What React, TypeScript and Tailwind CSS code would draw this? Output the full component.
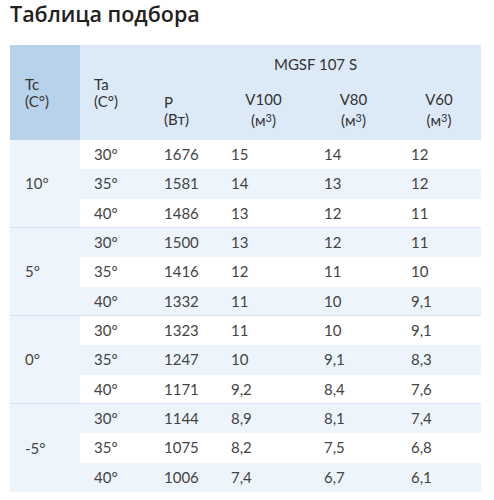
const groups = [
  {
    tc: "10°",
    rows: [
      ["30°", "1676", "15", "14", "12"],
      ["35°", "1581", "14", "13", "12"],
      ["40°", "1486", "13", "12", "11"],
    ],
  },
  {
    tc: "5°",
    rows: [
      ["30°", "1500", "13", "12", "11"],
      ["35°", "1416", "12", "11", "10"],
      ["40°", "1332", "11", "10", "9,1"],
    ],
  },
  {
    tc: "0°",
    rows: [
      ["30°", "1323", "11", "10", "9,1"],
      ["35°", "1247", "10", "9,1", "8,3"],
      ["40°", "1171", "9,2", "8,4", "7,6"],
    ],
  },
  {
    tc: "-5°",
    rows: [
      ["30°", "1144", "8,9", "8,1", "7,4"],
      ["35°", "1075", "8,2", "7,5", "6,8"],
      ["40°", "1006", "7,4", "6,7", "6,1"],
    ],
  },
];

function Unit({ label }: { label: string }) {
  return (
    <>
      <div>{label}</div>
      <div className="mt-[4px]">
        (м<span className="relative -top-[4px] text-[11px] leading-none">3</span>)
      </div>
    </>
  );
}

export default function App() {
  return (
    <main
      className="min-h-screen bg-white px-[10px] text-[#444]"
      style={{ fontFamily: "Lato, 'Noto Sans', sans-serif" }}
    >
      <h1
        className="pt-[1px] text-[21.5px] leading-[26px] font-semibold text-[#222]"
        style={{ fontFamily: "'Open Sans', 'Noto Sans', sans-serif" }}
      >
        Таблица подбора
      </h1>

      <table className="mt-[18px] w-[471px] table-fixed border-collapse text-[15px] leading-[17px]">
        <colgroup>
          <col className="w-[70px]" />
          <col className="w-[70px]" />
          <col className="w-[67px]" />
          <col className="w-[93px]" />
          <col className="w-[87px]" />
          <col className="w-[84px]" />
        </colgroup>
        <thead className="text-[#333]">
          <tr className="h-[35px] bg-[#dce9f7]">
            <th rowSpan={2} className="bg-[#b8d2eb] pl-[15px] text-left align-middle font-normal">
              Тс
              <br />
              (С°)
            </th>
            <th rowSpan={2} className="pl-[14px] text-left align-middle font-normal">
              Та
              <br />
              (С°)
            </th>
            <th colSpan={4} className="pt-[4px] text-center align-middle font-normal">
              MGSF 107 S
            </th>
          </tr>
          <tr className="h-[60px] bg-[#dce9f7]">
            <th className="pl-[14px] pt-[2px] text-left align-middle font-normal">
              P
              <br />
              (Вт)
            </th>
            <th className="text-center align-middle font-normal">
              <Unit label="V100" />
            </th>
            <th className="text-center align-middle font-normal">
              <Unit label="V80" />
            </th>
            <th className="text-center align-middle font-normal">
              <Unit label="V60" />
            </th>
          </tr>
        </thead>
        {groups.map((g, gi) => (
          <tbody key={g.tc} className={gi > 0 ? "border-t border-[#d6e3f2]" : ""}>
            {g.rows.map((r, ri) => {
              const idx = gi * 3 + ri;
              const bg = idx % 2 === 1 ? "bg-[#eef4fb]" : "bg-white";
              return (
                <tr key={r[0]} className={`h-[29.33px] ${bg}`}>
                  {ri === 0 && (
                    <td rowSpan={3} className="bg-[#eef4fb] pl-[15px] align-middle">
                      {g.tc}
                    </td>
                  )}
                  {r.map((c, ci) => (
                    <td key={ci} className="pl-[14px] align-middle">
                      {c}
                    </td>
                  ))}
                </tr>
              );
            })}
          </tbody>
        ))}
      </table>
    </main>
  );
}
